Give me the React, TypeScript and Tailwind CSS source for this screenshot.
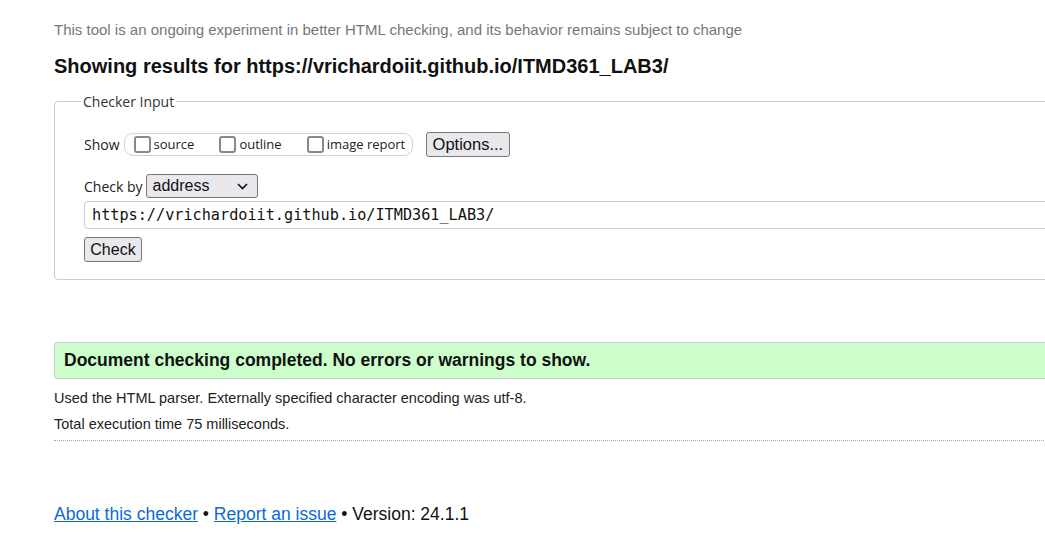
import React from 'react';

const UI_FONT = "font-['Open_Sans',sans-serif]";

function Box({ label }: { label: string }) {
  return (
    <label className="flex items-center gap-[3px]">
      <span className="w-[17px] h-[17px] rounded-[3px] border-2 border-[#8a8790] bg-white" />
      <span className={`${UI_FONT} text-[13px] text-[#222]`}>{label}</span>
    </label>
  );
}

export default function App() {
  return (
    <div className="w-[1045px] h-[541px] overflow-hidden bg-white font-['Liberation_Sans',Arial,sans-serif] text-[#111]">
      <div className="w-[1120px] pl-[54px] pt-[21px]">
        <p className="text-[15px] text-[#777] leading-[18px]">
          This tool is an ongoing experiment in better HTML checking, and its behavior remains subject to change
        </p>
        <h2 className="mt-[15px] text-[20px] font-bold leading-[24px] text-[#111]">
          Showing results for https://vrichardoiit.github.io/ITMD361_LAB3/
        </h2>

        <fieldset className="mt-[13px] border border-[#ccc] rounded-[4px] pl-[29px] pr-4 pb-[16px] h-[189px]">
          <legend className={`${UI_FONT} text-[14px] text-[#333] px-[2px] ml-[-3px]`}>Checker Input</legend>

          <div className="flex items-center mt-[20px]">
            <span className={`${UI_FONT} text-[14px] text-[#222] mr-[4px]`}>Show</span>
            <div className="flex items-center h-[23px] w-[289px] border border-[#d2d2d2] rounded-[9px] pl-[9px] gap-[25px]">
              <Box label="source" />
              <Box label="outline" />
              <Box label="image report" />
            </div>
            <button className="ml-[13px] h-[25px] px-[6px] border border-[#777] rounded-[3px] bg-[#e9e9ed] text-[16.5px] leading-none text-[#111]">
              Options...
            </button>
          </div>

          <div className="flex items-center mt-[17px]">
            <span className={`${UI_FONT} text-[14px] text-[#222] mr-[3px]`}>Check by</span>
            <div className="flex items-center justify-between w-[112px] h-[24px] border border-[#777] rounded-[3px] bg-[#e9e9ed] pl-[6px] pr-[9px]">
              <span className="text-[16px] leading-none text-[#111]">address</span>
              <svg width="11" height="7" viewBox="0 0 11 7" fill="none">
                <path d="M1 1l4.5 4.5L10 1" stroke="#111" strokeWidth="1.6" />
              </svg>
            </div>
          </div>

          <div className="mt-[3px] h-[28px] border border-[#ccc] rounded-[4px] flex items-center pl-[7px]">
            <span className="font-['DejaVu_Sans_Mono',monospace] text-[15.2px] text-[#111]">
              https://vrichardoiit.github.io/ITMD361_LAB3/
            </span>
          </div>

          <button className="mt-[8px] h-[25px] w-[58px] border border-[#777] rounded-[3px] bg-[#e9e9ed] text-[16px] leading-none text-[#111]">
            Check
          </button>
        </fieldset>

        <div className="mt-[62px] h-[37px] border border-[#ccc] rounded-[3px] bg-[#ccffcc] flex items-center pl-[9px]">
          <span className="text-[17.5px] font-bold text-[#111]">
            Document checking completed. No errors or warnings to show.
          </span>
        </div>

        <p className="mt-[10px] text-[14.5px] leading-[18px] text-[#222]">
          Used the HTML parser. Externally specified character encoding was utf-8.
        </p>
        <p className="mt-[8px] text-[14.5px] leading-[18px] text-[#222]">Total execution time 75 milliseconds.</p>
        <div className="mt-[7px] border-t border-dotted border-[#aaa]" />

        <p className="mt-[62px] text-[17.5px] leading-[22px] text-[#111]">
          <a className="text-[#0b6ad6] underline">About this checker</a>
          {' • '}
          <a className="text-[#0b6ad6] underline">Report an issue</a>
          {' • Version: 24.1.1'}
        </p>
      </div>
    </div>
  );
}
